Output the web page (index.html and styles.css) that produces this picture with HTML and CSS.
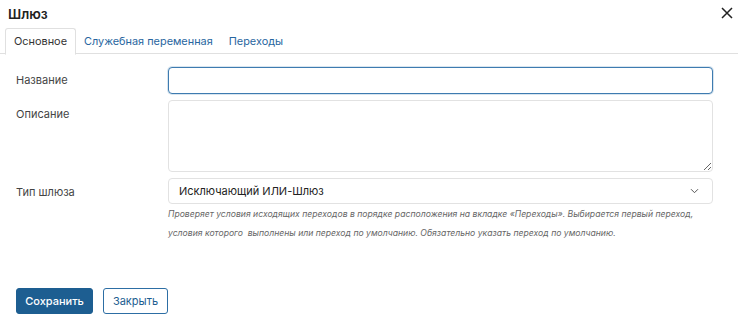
FILE: index.html
```html
<!DOCTYPE html>
<html lang="ru">
<head>
<meta charset="utf-8">
<link rel="stylesheet" href="styles.css">
</head>
<body>
<div class="dialog">
  <div class="header">
    <h1 class="title">Шлюз</h1>
    <button class="close" aria-label="Закрыть">
      <svg width="12" height="12" viewBox="0 0 12 12"><path d="M1 1L11 11M11 1L1 11" stroke="#222" stroke-width="1.5" fill="none"/></svg>
    </button>
  </div>
  <div class="tabs">
    <div class="tab active">Основное</div>
    <div class="tab">Служебная переменная</div>
    <div class="tab">Переходы</div>
  </div>
  <div class="form">
    <div class="row row-name">
      <label class="label">Название</label>
      <div class="field"><input class="input focused" type="text"></div>
    </div>
    <div class="row row-desc">
      <label class="label">Описание</label>
      <div class="field"><textarea class="textarea"></textarea></div>
    </div>
    <div class="row row-type">
      <label class="label">Тип шлюза</label>
      <div class="field">
        <div class="select">
          <span>Исключающий ИЛИ-Шлюз</span>
          <svg width="9" height="6" viewBox="0 0 9 6"><path d="M1 1.2L4.5 4.7L8 1.2" stroke="#555" stroke-width="1" fill="none"/></svg>
        </div>
        <p class="help">Проверяет условия исходящих переходов в порядке расположения на вкладке «Переходы». Выбирается первый переход, условия которого&nbsp; выполнены или переход по умолчанию. Обязательно указать переход по умолчанию.</p>
      </div>
    </div>
  </div>
  <div class="footer">
    <button class="btn primary">Сохранить</button>
    <button class="btn outline">Закрыть</button>
  </div>
</div>
</body>
</html>
```
FILE: styles.css
```css
* { box-sizing: border-box; }
html, body { margin: 0; padding: 0; background: #fff; }
body { font-family: Inter, "Noto Sans", sans-serif; color: #333; font-size: 11px; }
.dialog { width: 738px; height: 325px; position: relative; }
.header { display: flex; justify-content: space-between; align-items: center; padding: 2px 5px 0 8px; height: 25px; }
.title { margin: 0; font-size: 13.5px; font-weight: 600; color: #222; }
.close { border: 0; background: none; padding: 0; width: 12px; height: 12px; display: flex; margin-top: -2px; }
.tabs { display: flex; margin-top: 3px; padding-left: 5px; border-bottom: 1px solid #e0e0e0; height: 26px; }
.tab { padding: 0 8px; line-height: 26px; color: #2866a0; font-size: 10.9px; }
.tab.active { color: #333; background: #fff; border: 1px solid #e0e0e0; border-bottom-color: #fff; border-radius: 3px 3px 0 0; height: 27px; line-height: 25px; padding: 0 8px; }
.form { padding: 13px 25px 0 16px; }
.row { display: flex; }
.label { width: 152px; flex: none; color: #444; font-size: 11px; }
.field { flex: 1; }
.row-name .label { padding-top: 6px; }
.row-desc { margin-top: 6px; }
.row-desc .label { padding-top: 7px; }
.row-type { margin-top: 6px; }
.row-type .label { padding-top: 7px; }
.input { width: 100%; height: 27px; border: 1px solid #3e7bb0; border-radius: 4px; box-shadow: 0 0 0 1px rgba(62,123,176,0.2); outline: none; }
.textarea { width: 100%; height: 72px; border: 1px solid #e2e2e2; border-radius: 4px; display: block; resize: vertical; outline: none; }
.select { height: 26px; border: 1px solid #e2e2e2; border-radius: 4px; display: flex; align-items: center; justify-content: space-between; padding: 0 13px 0 10px; font-size: 11px; color: #222; }
.help { margin: 1px 0 0 0; font-style: italic; font-size: 8.65px; line-height: 19px; color: #666; }
.footer { display: flex; gap: 10px; padding: 0 0 0 16px; margin-top: 45px; }
.btn { font-family: Inter, "Noto Sans", sans-serif; font-size: 11px; font-weight: 500; height: 26px; border-radius: 3px; padding: 0; cursor: pointer; }
.btn.primary { background: #1d5e91; color: #fff; border: 1px solid #1d5e91; width: 77px; }
.btn.outline { background: #fff; color: #1d5e91; border: 1px solid #2d6ea4; width: 65px; font-weight: 400; }
```
